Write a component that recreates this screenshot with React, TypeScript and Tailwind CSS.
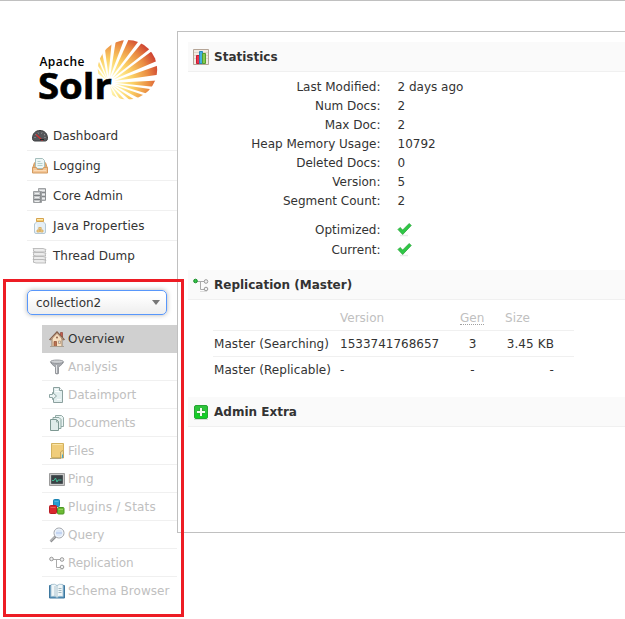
import type { ReactNode } from 'react';

function Svg({ children }: { children: ReactNode }) {
  return (
    <svg width="16" height="16" viewBox="0 0 16 16" className="block shrink-0" fill="none">
      {children}
    </svg>
  );
}

const GaugeIcon = () => (
  <Svg>
    <path d="M.5 10.5C.5 5.500 3.500 2.500 8 2.500s7.500 3 7.500 8c0 1.700-1 2.500-2.500 2.500H3C1.500 13 .5 12.200.5 10.500Z" fill="#55565a" stroke="#3b3c3e" />
    <path d="M2.500 9.500h1M3.500 6.500l1 .6M6 4.500l.5 1M9.500 5.500l.5-1M12 7l1-.5M12.500 9.500h1" stroke="#a3a6a9" />
    <path d="m4 6.500 6.500 6" stroke="#d62f2f" strokeWidth="1.200" />
    <path d="M8 11.500h4" stroke="#242426" />
  </Svg>
);
const InboxIcon = () => (
  <Svg>
    <path d="m2.500 4.500-2 6v4h15v-4l-2-6" fill="#e0ab72" stroke="#d39b60" />
    <path d="M3.500.5h7l2 2v8h-9z" fill="#edf6f5" stroke="#a5bebc" />
    <path d="M5.500 3.500h3M5.500 5.500h5M5.500 7.500h5" stroke="#b2cecc" />
    <path d="M.5 9.500h4l1 2h5l1-2h4v5.500H.5z" fill="#f4c594" stroke="#d39b60" />
    <path d="M2 12.500h12" stroke="#fadcb8" />
  </Svg>
);
const ServersIcon = () => (
  <Svg>
    <path d="M6.500.5h7v12h-7z" fill="#c9cbcd" stroke="#a0a3a5" />
    <path d="M7 4.500h7M7 8.500h7" stroke="#85888b" />
    <path d="M8 2.500h5M8 6.500h5M8 10.500h5" stroke="#eceeef" />
    <path d="M1.500 3.500h8v11h-8z" fill="#c3c5c7" stroke="#9b9ea0" />
    <path d="M2 7.500h7M2 11.500h7" stroke="#7e8184" />
    <path d="M3 5.500h4M3 9.500h4M3 13.500h4" stroke="#edefef" />
    <path d="M8.500 4v10M13.500 1v11" stroke="#8d9092" />
  </Svg>
);
const JarIcon = () => (
  <Svg>
    <path d="M5 3.500 2.500 6v8q0 1.500 1.500 1.500h8q1.500 0 1.500-1.500V6L11 3.500z" fill="#e5eff6" stroke="#b4c8d5" />
    <path d="M4.500.5h7v3h-7z" fill="#f4cc70" stroke="#d5a34f" />
    <path d="M5 1.500h6" stroke="#ffebae" />
    <path d="M4 6.500v6.500" stroke="#fff" />
    <path d="M5 12h2.500v2H5zM8.500 12H11v2H8.500zM6.800 9.500h2.400v2H6.800z" fill="#f4cf80" stroke="#d3aa61" strokeWidth=".8" />
  </Svg>
);
const ThreadIcon = () => (
  <Svg>
    {[1, 5, 9, 12].map((y) => (
      <path key={y} d={`M1 ${y - .5}h10l3 1-1 1.500 1 1H4L1 ${y + 2}l1-1z`} fill="#ececec" stroke="#aeaeae" strokeWidth=".8" />
    ))}
  </Svg>
);
const HouseIcon = () => (
  <Svg>
    <path d="M11.500 1.500h2V6h-2z" fill="#c95b4d" stroke="#8b4538" strokeWidth=".7" />
    <path d="M3 7 8 2l5 5v8.500H3z" fill="#f7dfc0" stroke="#8c6c51" strokeWidth=".8" />
    <path d="M.7 9 8 1.300 15.300 9" stroke="#75523e" strokeWidth="1.800" />
    <path d="M1.300 8.500 8 1.800l6.700 6.700" stroke="#d5b298" strokeWidth=".8" />
    <path d="M5 10.500h2.500v5H5z" fill="#bc7350" stroke="#8b4c38" strokeWidth=".7" />
    <path d="M9.500 10h2v2.500h-2z" fill="#d7dfdf" stroke="#a58468" strokeWidth=".6" />
    <circle cx="8" cy="6.500" r="1" fill="#90664e" />
    <path d="M1 15.500h14" stroke="#a9a092" />
  </Svg>
);
const FunnelIcon = () => (
  <Svg>
    <path d="M1.500 3c1.200 3 4.500 4.200 5 5.500v6q1.500 1 3 0v-6c.5-1.300 3.800-2.500 5-5.500" fill="#a7aaaf" stroke="#85888d" strokeWidth=".8" />
    <ellipse cx="8" cy="2.700" rx="6.500" ry="1.700" fill="#cfd1d4" stroke="#85888d" strokeWidth=".8" />
    <path d="M7.500 6v8" stroke="#e4e5e7" />
  </Svg>
);
const ImportIcon = () => (
  <Svg>
    <path d="M4.500.5h6l3 3v12h-9z" fill="#e2eeee" stroke="#8ba09e" />
    <path d="M10.500.5v3h3" fill="#fff" stroke="#8ba09e" />
    <path d="M6 2.500h3M6 4.500h5M8 12.500h4" stroke="#fafdfd" />
    <path d="M.5 7.500h3V5.500l4 3.500-4 3.500v-2h-3z" fill="#edf4f4" stroke="#8da5a3" />
  </Svg>
);
const DocumentsIcon = () => (
  <Svg>
    <path d="M6.500.5h6l2 2v9h-8z" fill="#e9f3f2" stroke="#93aaa6" />
    <path d="M4 2.500h6l2 2v9H4z" fill="#e3efed" stroke="#8ca6a1" />
    <path d="M1.500 4.500h6l2 2v9h-8z" fill="#dfecea" stroke="#7d9892" />
    <path d="M7.500 5v2h2" stroke="#91aaa5" />
  </Svg>
);
const FolderIcon = () => (
  <Svg>
    <path d="M2.500.5h12v14h-12z" fill="#f0cd7b" stroke="#d3b25f" />
    <path d="M3.500 1.500h10" stroke="#f9e5a9" />
    <path d="M11.500 9q2.500-3 3 0v6h-3z" fill="#ebd795" stroke="#b99c58" strokeWidth=".8" />
    <path d="M13.500 11.500V15" stroke="#45aad7" />
    <path d="M1 15.500h11" stroke="#b2a785" />
  </Svg>
);
const PingIcon = () => (
  <Svg>
    <path d="M.5 2.500h15v12H.5z" fill="#c8c8c8" stroke="#9b9b9b" />
    <path d="M2.500 4.500h11v8h-11z" fill="#394145" stroke="#4d5558" />
    <path d="M3 9.500h2L6.500 7l1.500 4 1-2h3.500" stroke="#43c59c" strokeWidth=".9" />
  </Svg>
);
const BlocksIcon = () => (
  <Svg>
    <rect x="4.500" y=".5" width="6" height="7" rx="1" fill="#269ed2" stroke="#1c83b2" />
    <path d="M5.500 2.500h4" stroke="#55b9e0" />
    <rect x=".5" y="6.500" width="7" height="8" rx="1" fill="#d9282d" stroke="#b81c24" />
    <path d="M1.500 8.500h5" stroke="#ee5c58" />
    <rect x="8.500" y="8.500" width="6.500" height="6.500" rx="1" fill="#6cba34" stroke="#4b9622" />
    <path d="M9.500 10.500h4.500" stroke="#93d260" />
  </Svg>
);
const MagnifierIcon = () => (
  <Svg>
    <path d="m6.500 9.500-5 5" stroke="#8e8f91" strokeWidth="2.500" />
    <path d="m6 9.500-4.500 4.500" stroke="#d0d1d3" />
    <circle cx="10" cy="6" r="5" fill="#dce8f8" stroke="#a1a4a8" />
    <circle cx="10" cy="6" r="4" stroke="#f5f8fb" strokeWidth=".8" />
    <path d="M7 6h6" stroke="#bccff0" strokeWidth="1.500" />
  </Svg>
);
const TreeIcon = ({ active = false }: { active?: boolean }) => (
  <Svg>
    <path d="M4 4.500h8M7.500 5v7.500H11" stroke="#aaa" />
    <circle cx="2.500" cy="4" r="1.800" fill={active ? '#35c348' : '#eee'} stroke={active ? '#148c26' : '#999'} />
    <circle cx="13" cy="4.500" r="1.800" fill="#f2f2f2" stroke="#999" />
    <circle cx="13" cy="12" r="1.800" fill="#f2f2f2" stroke="#999" />
    <path d="M7 14.500h7" stroke="#ddd" />
  </Svg>
);
const BookIcon = () => (
  <Svg>
    <path d="M.5 2.500h15v12.500H.5z" fill="#5b94bd" stroke="#3e789f" />
    <path d="M2 1.500q4-1 6 1 2-2 6-1v12q-4-1-6 1-2-2-6-1z" fill="#f0f6f8" stroke="#98b9ca" strokeWidth=".8" />
    <path d="M8 2.500v12M6 3v10" stroke="#9db9c5" strokeWidth=".8" />
    <path d="M9.500 5.500h3M9.500 7.500h3M9.500 9.500h3" stroke="#a2b8c0" />
  </Svg>
);
const ChartIcon = () => (
  <Svg>
    <path d="M.5.5h15v15H.5z" fill="#f2eae2" stroke="#b5a597" />
    <path d="M1 3.500h14M1 6.500h14M1 9.500h14" stroke="#dfd4c9" />
    <path d="M3.500 6.500h3v8h-3z" fill="#ee3349" stroke="#c71b34" />
    <path d="M6.500 2.500h3v12h-3z" fill="#42afe0" stroke="#2588b8" />
    <path d="M9.500 4.500h3v10h-3z" fill="#83ca4e" stroke="#549c30" />
  </Svg>
);
const PlusIcon = () => (
  <Svg>
    <path d="M1 15.500h14" stroke="#d4ddd4" />
    <rect x="1.500" y="1.500" width="13" height="13" rx="1.500" fill="#2dc43b" stroke="#25a532" />
    <path d="M2 9h12v5H2z" fill="#12ce25" />
    <path d="M8 4v8M4 8h8" stroke="#2d9a35" strokeWidth="3.200" />
    <path d="M8 4v8M4 8h8" stroke="#f2fbef" strokeWidth="2" />
  </Svg>
);
const CheckIcon = () => (
  <Svg>
    <path d="M3 13.500h8" stroke="#e9e9e9" strokeWidth="1.500" />
    <path d="m1 7.500 2-2 2.700 2.500 6.500-6.500 2 2-8.500 9z" fill="#2fc846" stroke="#2ba53b" strokeWidth=".8" />
  </Svg>
);

// Outer corners of the sunburst's rays, clockwise from the lower left.
const rayEnds = [
  [58.5, 33.5, 59, 29], [60.3, 27.5, 61.3, 23.5], [62, 20, 64.5, 15.500],
  [67, 11, 73.5, 5.5], [77.5, 3.3, 86, 1], [90.5, .5, 100, 3],
  [103, 4.700, 111, 10.5], [112.5, 13, 117.700, 22.5], [118.500, 27, 119.500, 36],
  [119, 41.500, 117, 48], [115.700, 50.500, 111, 55.3], [108, 57, 102, 60],
  [97, 61, 91.700, 61], [87, 61, 81.700, 60], [78.700, 58.5, 74.3, 56],
];

function SolrLogo() {
  const ox = 70.5;
  const oy = 43.5;
  return (
    <svg width="122" height="64" viewBox="0 0 122 64" className="block overflow-visible">
      <defs>
        <radialGradient id="sun" gradientUnits="userSpaceOnUse" cx="71" cy="44" r="57">
          <stop offset="0" stopColor="#fffbe0" />
          <stop offset=".2" stopColor="#fff0a0" />
          <stop offset=".42" stopColor="#fbd065" />
          <stop offset=".7" stopColor="#ea8c42" />
          <stop offset="1" stopColor="#c4262c" />
        </radialGradient>
        <clipPath id="disc"><circle cx="89.500" cy="30.700" r="29.700" /></clipPath>
      </defs>
      <g fill="url(#sun)" clipPath="url(#disc)">
        {rayEnds.map(([x1, y1, x2, y2], i) => {
          const mx = (x1 + x2) / 2 - ox;
          const my = (y1 + y2) / 2 - oy;
          const len = Math.hypot(mx, my);
          const skip = len > 30 ? 6 : 3;
          const ax = ox + (mx / len) * skip;
          const ay = oy + (my / len) * skip;
          const px = (x: number) => ox + (x - ox) * 1.1;
          const py = (y: number) => oy + (y - oy) * 1.1;
          return <path key={i} d={`M${ax} ${ay} ${px(x1)} ${py(y1)} ${px(x2)} ${py(y2)}z`} />;
        })}
      </g>
      <text x="1.500" y="27" fontFamily="Open Sans" fontWeight="600" fontSize="12" textLength="45">Apache</text>
      <text x="0" y="60" fontFamily="Open Sans" fontWeight="700" fontSize="35" textLength="74" lengthAdjust="spacingAndGlyphs" stroke="#000" strokeWidth=".6">Solr</text>
    </svg>
  );
}

const mainItems = [
  { label: 'Dashboard', icon: <GaugeIcon /> },
  { label: 'Logging', icon: <InboxIcon /> },
  { label: 'Core Admin', icon: <ServersIcon /> },
  { label: 'Java Properties', icon: <JarIcon />, tracking: 'tracking-[0.13px]' },
  { label: 'Thread Dump', icon: <ThreadIcon /> },
];
const coreItems = [
  { label: 'Analysis', icon: <FunnelIcon /> },
  { label: 'Dataimport', icon: <ImportIcon /> },
  { label: 'Documents', icon: <DocumentsIcon />, tracking: 'tracking-[-0.1px]' },
  { label: 'Files', icon: <FolderIcon /> },
  { label: 'Ping', icon: <PingIcon /> },
  { label: 'Plugins / Stats', icon: <BlocksIcon />, tracking: 'tracking-[0.17px]' },
  { label: 'Query', icon: <MagnifierIcon /> },
  { label: 'Replication', icon: <TreeIcon />, tracking: 'tracking-[-0.08px]' },
  { label: 'Schema Browser', icon: <BookIcon />, tracking: 'tracking-[0.06px]' },
];
const stats = [
  ['Last Modified:', '2 days ago'],
  ['Num Docs:', '2'],
  ['Max Doc:', '2'],
  ['Heap Memory Usage:', '10792'],
  ['Deleted Docs:', '0'],
  ['Version:', '5'],
  ['Segment Count:', '2'],
];

function Heading({ icon, children }: { icon: ReactNode; children: ReactNode }) {
  return (
    <h2 className="flex h-[30px] items-center gap-[5px] border-b border-[#f0f0f0] bg-[#fafafa] pl-[5px] font-bold">
      {icon}
      <span>{children}</span>
    </h2>
  );
}

export default function App() {
  return (
    <div className="relative h-[619px] w-[625px] overflow-hidden border-t border-[#c0c0c0] bg-white font-['DejaVu_Sans',sans-serif] text-[12px] leading-[18px] whitespace-nowrap text-[#333]">
      <div className="flex pt-[30px]">
        <aside className="w-[177px] shrink-0 pt-2">
          <div className="h-[82px] pl-[38px]"><SolrLogo /></div>
          <nav className="pl-[27px]">
            {mainItems.map(({ label, icon, tracking }) => (
              <div key={label} className="flex h-[30px] items-center gap-[5px] border-b border-[#f0f0f0] pl-[5px] last:border-0">
                {icon}<span className={tracking}>{label}</span>
              </div>
            ))}
          </nav>
          <div className="mt-[19px] ml-[27px] flex h-[25px] w-[140px] items-center justify-between rounded-[5px] border border-[#5897fb] bg-linear-to-b from-white from-20% to-[#eee] pr-[6px] pl-2 shadow-[0_0_5px_rgba(0,0,0,.3)]">
            <span>collection2</span>
            <svg width="8" height="5" className="block"><path d="M0 0h8L4 5z" fill="#777" /></svg>
          </div>
          <nav className="mt-[10px] pl-[42px]">
            <div className="flex h-7 w-[136px] items-center gap-[3px] bg-[#d0d0d0] pl-[7px]"><HouseIcon /><span>Overview</span></div>
            {coreItems.map(({ label, icon, tracking }) => (
              <div key={label} className="flex h-7 items-center gap-[3px] border-b border-[#f0f0f0] pl-[7px] text-[#c0c0c0] last:border-0">
                {icon}<span className={tracking}>{label}</span>
              </div>
            ))}
          </nav>
        </aside>
        <main className="h-[502px] w-[448px] border border-r-0 border-[#c0c0c0] pt-[10px] pl-[10px]">
          <section className="h-[228px]">
            <Heading icon={<ChartIcon />}>Statistics</Heading>
            <dl className="pt-[5px]">
              {stats.map(([label, value]) => (
                <div key={label} className="flex h-[19px] items-center">
                  <dt className="w-[192.5px] text-right">{label}</dt>
                  <dd className="ml-[17px]">{value}</dd>
                </div>
              ))}
              <div className="mt-[10px]">
                {['Optimized:', 'Current:'].map((label) => (
                  <div key={label} className="flex h-5 items-center">
                    <dt className="w-[192.5px] text-right">{label}</dt>
                    <dd className="ml-4 pb-px"><CheckIcon /></dd>
                  </div>
                ))}
              </div>
            </dl>
          </section>
          <section className="h-[127px]">
            <Heading icon={<TreeIcon active />}>Replication (Master)</Heading>
            <div className="mt-[5px] ml-[25px] w-[361px]">
              <div className="flex h-[26px] items-center border-b border-[#f0f0f0] text-[#c0c0c0]">
                <span className="ml-[127px] w-[120px]">Version</span>
                <span className="w-[45px]"><span className="inline-block h-[15px] border-b border-dotted border-[#a0a0a0] leading-[16px]">Gen</span></span>
                <span className="tracking-[0.1px]">Size</span>
              </div>
              {[['Master (Searching)', '1533741768657', '3', '3.45 KB'], ['Master (Replicable)', '-', '-', '-']].map(([name, version, gen, size]) => (
                <div key={name} className="flex h-[26px] items-center border-b border-[#f0f0f0] last:border-0">
                  <span className="w-[127px] pl-px tracking-[0.06px]">{name}</span>
                  <span className="w-[120px]">{version}</span>
                  <span className="w-[25px] text-center">{gen}</span>
                  <span className="w-[69px] text-right tracking-[0.1px]">{size}</span>
                </div>
              ))}
            </div>
          </section>
          <Heading icon={<PlusIcon />}>Admin Extra</Heading>
        </main>
      </div>
      <div className="pointer-events-none absolute top-[278px] left-[3px] h-[338px] w-[181px] border-[3px] border-[#ed1c24]" />
    </div>
  );
}
